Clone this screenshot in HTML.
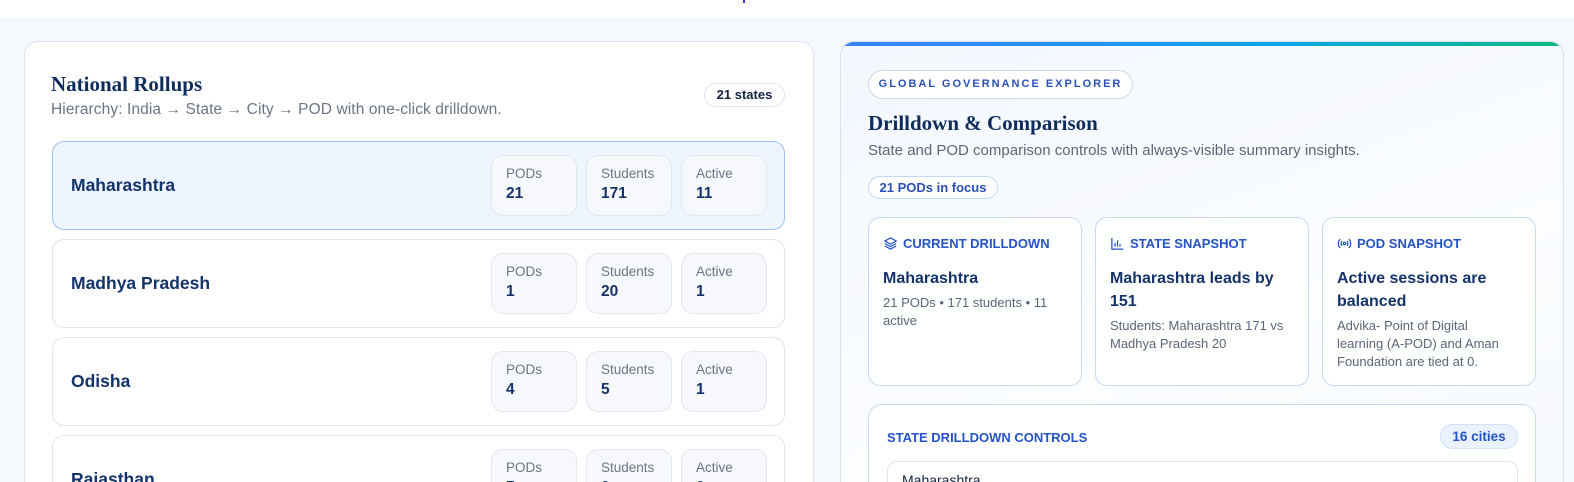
<!DOCTYPE html><html><head><style>
*{box-sizing:border-box;margin:0;padding:0}
html,body{width:1574px;height:482px;overflow:hidden}
body{background:#f5f8fd;font-family:"Liberation Sans",sans-serif;position:relative;color:#0f2d5c}
.top{position:absolute;left:0;top:0;width:1574px;height:17px;background:#fff}
.card{position:absolute;background:#fff;border:1px solid #dbe3ef;border-radius:14px;overflow:hidden}
.serif{font-family:"Liberation Serif",serif;font-weight:bold;color:#0f2d5c}
.row{position:absolute;left:52px;width:733px;height:89px;border:1px solid #dfe5ee;border-radius:12px;background:#fff}
.row.sel{background:#eef5fe;border-color:#9cc3ef}
.row .nm{position:absolute;left:18px;top:33px;font-size:17.5px;font-weight:bold;color:#14336a}
.st{position:absolute;top:13px;width:86px;height:61px;border:1px solid #e1e7ef;border-radius:12px;background:#f6f8fb;padding:10px 0 0 14px}
.st .l{font-size:13.5px;color:#6b7585}
.st .v{font-size:15.5px;font-weight:bold;color:#14336a;margin-top:4px}
.pill{position:absolute;border:1px solid #c9d9f0;border-radius:20px;background:#fff}
.ic{position:absolute;top:217px;width:214px;height:169px;border:1px solid #c9daf0;border-radius:12px;background:rgba(255,255,255,.85);padding:18px 14px}
.ic .h{font-size:13px;font-weight:bold;color:#2453c7;display:flex;align-items:center;gap:5px}
.ic .t{font-size:16px;font-weight:bold;color:#14336a;margin-top:16px;line-height:23px}
.ic .d{font-size:13px;color:#5b6678;line-height:18px;margin-top:4px}
</style></head><body>
<div class="top"></div>
<div style="position:absolute;left:743px;top:0;width:2px;height:3px;background:#3040d0"></div>

<div class="card" style="left:24px;top:41px;width:790px;height:460px"></div>
<div style="position:absolute;left:51px;top:72px;font-size:21px" class="serif">National Rollups</div>
<div style="position:absolute;left:51px;top:101px;font-size:15.5px;color:#6b7585;letter-spacing:.1px">Hierarchy: India → State → City → POD with one-click drilldown.</div>
<div class="pill" style="left:704px;top:83px;width:81px;height:24px;border-color:#dfe5ee;font-size:13px;font-weight:bold;color:#14233f;text-align:center;line-height:22px">21 states</div>

<div class="row sel" style="top:141px"><div class="nm">Maharashtra</div>
<div class="st" style="left:438px"><div class="l">PODs</div><div class="v">21</div></div>
<div class="st" style="left:533px"><div class="l">Students</div><div class="v">171</div></div>
<div class="st" style="left:628px"><div class="l">Active</div><div class="v">11</div></div></div>
<div class="row" style="top:239px"><div class="nm">Madhya Pradesh</div>
<div class="st" style="left:438px"><div class="l">PODs</div><div class="v">1</div></div>
<div class="st" style="left:533px"><div class="l">Students</div><div class="v">20</div></div>
<div class="st" style="left:628px"><div class="l">Active</div><div class="v">1</div></div></div>
<div class="row" style="top:337px"><div class="nm">Odisha</div>
<div class="st" style="left:438px"><div class="l">PODs</div><div class="v">4</div></div>
<div class="st" style="left:533px"><div class="l">Students</div><div class="v">5</div></div>
<div class="st" style="left:628px"><div class="l">Active</div><div class="v">1</div></div></div>
<div class="row" style="top:435px"><div class="nm">Rajasthan</div>
<div class="st" style="left:438px"><div class="l">PODs</div><div class="v">7</div></div>
<div class="st" style="left:533px"><div class="l">Students</div><div class="v">0</div></div>
<div class="st" style="left:628px"><div class="l">Active</div><div class="v">0</div></div></div>

<div class="card" style="left:840px;top:41px;width:724px;height:460px;background:linear-gradient(160deg,#f3f7fd,#fbfdff 60%,#f6f9fd);border-color:#d7e2f0">
<div style="height:4px;background:linear-gradient(90deg,#3b82f6,#0ea5e9 60%,#10b981)"></div></div>
<div class="pill" style="left:868px;top:70px;width:265px;height:29px;font-size:11px;font-weight:bold;letter-spacing:2px;color:#2a4fb8;text-align:center;line-height:27px">GLOBAL GOVERNANCE EXPLORER</div>
<div style="position:absolute;left:868px;top:111px;font-size:21px" class="serif">Drilldown &amp; Comparison</div>
<div style="position:absolute;left:868px;top:142px;font-size:15px;color:#5b6678">State and POD comparison controls with always-visible summary insights.</div>
<div class="pill" style="left:868px;top:176px;width:130px;height:23px;font-size:13px;font-weight:bold;color:#2a4fb8;text-align:center;line-height:21px">21 PODs in focus</div>

<div class="ic" style="left:868px"><div class="h"><svg width="15" height="15" viewBox="0 0 24 24" fill="none" stroke="#2453c7" stroke-width="2"><path d="M12 3 3 8l9 5 9-5z"/><path d="M3 12l9 5 9-5M3 16l9 5 9-5"/></svg>CURRENT DRILLDOWN</div><div class="t">Maharashtra</div><div class="d">21 PODs • 171 students • 11 active</div></div>
<div class="ic" style="left:1095px"><div class="h"><svg width="15" height="15" viewBox="0 0 24 24" fill="none" stroke="#2453c7" stroke-width="2"><path d="M3 3v18h18M8 17v-6M12 17V7M16 17v-4"/></svg>STATE SNAPSHOT</div><div class="t" style="padding-right:20px">Maharashtra leads by 151</div><div class="d">Students: Maharashtra 171 vs Madhya Pradesh 20</div></div>
<div class="ic" style="left:1322px"><div class="h"><svg width="15" height="15" viewBox="0 0 24 24" fill="none" stroke="#2453c7" stroke-width="2"><circle cx="12" cy="12" r="2"/><path d="M8 8a6 6 0 0 0 0 8M16 8a6 6 0 0 1 0 8M5 5a10 10 0 0 0 0 14M19 5a10 10 0 0 1 0 14"/></svg>POD SNAPSHOT</div><div class="t">Active sessions are balanced</div><div class="d" style="padding-right:10px">Advika- Point of Digital learning (A-POD) and Aman Foundation are tied at 0.</div></div>

<div style="position:absolute;left:868px;top:404px;width:668px;height:100px;border:1px solid #c9daf0;border-radius:14px;background:rgba(255,255,255,.85)">
<div style="position:absolute;left:18px;top:25px;font-size:13px;font-weight:bold;color:#2453c7">STATE DRILLDOWN CONTROLS</div>
<div style="position:absolute;left:571px;top:19px;width:78px;height:25px;border:1px solid #d3e1f5;border-radius:14px;background:#eaf2fd;font-size:13.5px;font-weight:bold;color:#2453c7;text-align:center;line-height:23px">16 cities</div>
<div style="position:absolute;left:18px;top:56px;width:631px;height:40px;border:1px solid #dfe5ee;border-radius:10px;background:#fff;padding:10px 14px;font-size:14px;color:#14233f">Maharashtra</div>
</div>
</body></html>
